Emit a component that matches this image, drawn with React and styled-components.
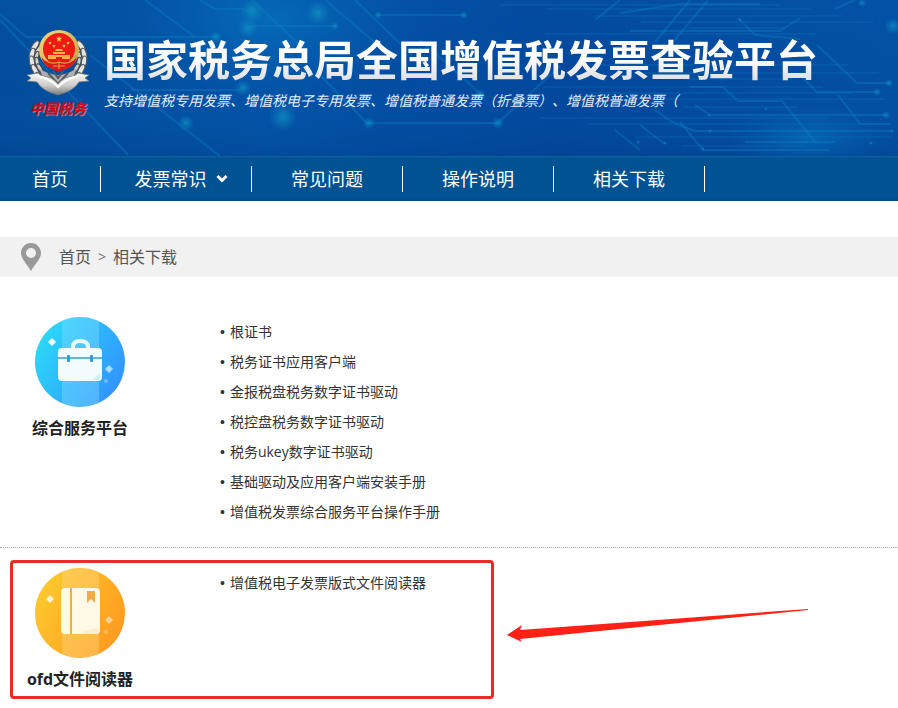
import React from "react";
import styled, { createGlobalStyle } from "styled-components";

const GlobalStyle = createGlobalStyle`
  * { box-sizing: border-box; }
  body {
    margin: 0;
    background: #fff;
    color: #333;
    font-family: "Open Sans", "Noto Sans CJK SC", sans-serif;
    text-spacing-trim: space-all;
    overflow-x: hidden;
  }
  a { color: inherit; text-decoration: none; }
`;

const Banner = styled.header`
  position: relative;
  overflow: hidden;
  display: flex;
  align-items: flex-start;
  gap: 12px;
  padding: 28px 24px 36px;
  min-height: 156px;
  background: linear-gradient(90deg, #034d9c 0%, #0352a6 30%, #03479c 62%, #034fa2 100%);
`;

const Circuit = styled.svg`
  position: absolute;
  inset: 0;
  width: 100%;
  height: 100%;
`;

const Brand = styled.div`
  position: relative;
  flex: none;
  width: 68px;
  display: flex;
  flex-direction: column;
  align-items: center;
`;

const BrandName = styled.span`
  font: italic 900 14px/20px "Noto Sans CJK SC", sans-serif;
  color: #c80d18;
  text-shadow: 1px 1px 0 #7088b4;
  white-space: nowrap;
`;

const Titles = styled.div`
  position: relative;
  white-space: nowrap;
`;

const Title = styled.h1`
  margin: 0;
  font-size: 42px;
  line-height: 64px;
  font-weight: 700;
  background: linear-gradient(180deg, #fff 45%, #dcdde2 85%);
  background-clip: text;
  -webkit-background-clip: text;
  color: transparent;
`;

const Subtitle = styled.p`
  margin: 0;
  font-size: 14px;
  line-height: 18px;
  font-style: italic;
  color: #e3ecf8;
`;

const Nav = styled.nav`
  display: flex;
  align-items: center;
  height: 45px;
  background: linear-gradient(180deg, #09609f 1px, #005293 2px, #005293 41px, #004b8d 43px);
`;

const NavLink = styled.a`
  display: flex;
  align-items: center;
  justify-content: center;
  gap: 9px;
  flex: none;
  width: ${(p) => (p.$first ? 101 : 151)}px;
  height: 26px;
  padding-left: ${(p) => (p.$menu ? 10 : 0)}px;
  border-right: 1px solid #fff;
  color: #fff;
  font-size: 18px;
  line-height: 26px;
`;

const Crumbs = styled.nav`
  display: flex;
  align-items: center;
  gap: 7px;
  height: 40px;
  margin-top: 36px;
  padding-left: 20px;
  background: #f1f1f1;
  color: #555;
  font-size: 16px;
  line-height: 24px;
`;

const Pin = styled.svg`
  width: 22px;
  height: 28px;
  margin-right: 10px;
`;

const Separator = styled.span`
  font-size: 14px;
  color: #777;
`;

const Content = styled.main`
  padding-top: 24px;
`;

const Section = styled.section`
  position: relative;
  display: flex;
  align-items: flex-start;
  padding: ${(p) => (p.$divided ? "16px 0 20px" : "20px 0 16px")};
  border-bottom: ${(p) => (p.$divided ? "1px dotted #aaa" : "none")};
`;

const Category = styled.div`
  flex: none;
  width: 160px;
  display: flex;
  flex-direction: column;
  align-items: center;
`;

const CategoryTitle = styled.h2`
  margin: 9px 0 0;
  font-size: 16px;
  line-height: 24px;
  font-weight: 700;
  color: #222;
`;

const Links = styled.ul`
  list-style: none;
  margin: 0;
  padding: 0 0 0 60px;
  font-size: 14px;
  line-height: 30px;
`;

const LinkRow = styled.li`
  display: flex;
  gap: 5px;
  &::before {
    content: "•";
    font-family: "Liberation Sans", sans-serif;
  }
`;

const Highlight = styled.div`
  position: absolute;
  left: 10px;
  top: 12px;
  width: 484px;
  height: 139px;
  border: 3px solid #ec2a22;
  border-radius: 4px;
  pointer-events: none;
`;

const Arrow = styled.svg`
  position: absolute;
  left: 506px;
  top: 60px;
  width: 304px;
  height: 36px;
  pointer-events: none;
`;

const strands = [
  "M0 14L26 37H215", "M0 20L128 155", "M145 0L195 37", "M90 55L220 156",
  "M200 0L215 9H245L252 15", "M252 26H335", "M130 90H240", "M252 0L300 45",
  "M325 0L378 45", "M355 0L412 55", "M376 15H464", "M320 75L367 123H498L560 66",
  "M420 40L482 95", "M595 20L620 0", "M655 42L690 0", "M668 48L708 0",
  "M738 18L755 35L800 39", "M817 45L857 83H890", "M800 75L817 92H875",
  "M838 95L860 124H890", "M690 87H723L738 101H782L816 143", "M710 115H885",
  "M695 105L710 115", "M640 125L665 144", "M680 122L703 150H830",
  "M655 110L672 122L695 131H892", "M745 142H835", "M615 130L640 150",
  "M620 13L680 4H760", "M630 31H780L800 18", "M835 9L855 0",
];

const nodes = [
  [252, 11, 6], [248, 28, 5], [318, 13, 6], [216, 37, 3], [243, 88, 4],
  [283, 117, 7], [186, 123, 4], [335, 26, 2], [378, 15, 2], [464, 15, 2],
  [369, 123, 3], [498, 123, 3], [480, 95, 3], [893, 26, 4], [862, 3, 2],
  [877, 92, 2], [889, 83, 2], [886, 115, 2], [710, 131, 1], [709, 115, 1],
  [665, 143, 1], [703, 149, 1], [740, 20, 1], [638, 142, 1], [871, 143, 1],
  [766, 109, 1], [892, 131, 1],
];

const traces = [5, 9, 16, 22, 28, 34, 65, 73, 79, 87, 93, 99, 107, 118, 124, 137, 146];

function CircuitArt() {
  return (
    <Circuit viewBox="0 0 898 156" preserveAspectRatio="xMinYMin slice" aria-hidden="true">
      <defs>
        <radialGradient id="node">
          <stop offset="0" stopColor="#1396c6" stopOpacity=".75" />
          <stop offset=".5" stopColor="#0c86be" stopOpacity=".45" />
          <stop offset="1" stopColor="#0c86be" stopOpacity="0" />
        </radialGradient>
        <radialGradient id="glow">
          <stop offset="0" stopColor="#078bd0" stopOpacity=".4" />
          <stop offset="1" stopColor="#0770c0" stopOpacity="0" />
        </radialGradient>
        <linearGradient id="shade" x2="0" y2="1">
          <stop offset="0" stopColor="#0866b8" stopOpacity=".15" />
          <stop offset=".6" stopColor="#0866b8" stopOpacity="0" />
          <stop offset="1" stopColor="#003a7c" stopOpacity=".25" />
        </linearGradient>
      </defs>
      <rect width="898" height="156" fill="url(#shade)" />
      <ellipse cx="270" cy="20" rx="150" ry="80" fill="url(#glow)" />
      <ellipse cx="808" cy="138" rx="80" ry="32" fill="url(#glow)" />
      <g stroke="#0b79bd" strokeOpacity=".24" strokeWidth="2">
        {traces.map((y, i) => (
          <path key={y} d={`M${500 + ((i * 47) % 190)} ${y}H${780 + ((i * 31) % 118)}`} />
        ))}
      </g>
      <g fill="none" stroke="#0b80c4" strokeOpacity=".4" strokeWidth="2">
        {strands.map((d) => <path key={d} d={d} />)}
      </g>
      {nodes.map(([x, y, r]) => (
        <circle key={`${x}-${y}`} cx={x} cy={y} r={r * 2} fill="url(#node)" />
      ))}
    </Circuit>
  );
}

function Emblem() {
  const leaves = [[-23, -8, -35], [-26, 0, -15], [-26, 8, 10], [-23, 16, 30], [-18, 23, 45]];
  const star = "M0-5L1-2H5L2 1L3 5L0 2L-3 5L-2 1L-5-2H-1Z";
  return (
    <svg width="68" height="70" viewBox="0 0 68 70" aria-hidden="true">
      <defs>
        <linearGradient id="silver" x2="0" y2="1">
          <stop offset="0" stopColor="#f7f7f5" />
          <stop offset=".55" stopColor="#cfcfcb" />
          <stop offset="1" stopColor="#787b80" />
        </linearGradient>
        <linearGradient id="gold" x2="1" y2="1">
          <stop offset="0" stopColor="#f0dc83" />
          <stop offset="1" stopColor="#c79b3b" />
        </linearGradient>
      </defs>
      {[1, -1].map((side) => (
        <g key={side} transform={`translate(34 26) scale(${side} 1)`}>
          <path d="M-21-12C-31 5-27 20-7 33L-4 26C-18 19-22 6-17-7Z" fill="#555b64" />
          {leaves.map(([x, y, turn]) => (
            <g key={y} transform={`translate(${x} ${y}) rotate(${-turn})`}>
              <ellipse rx="2.5" ry="6" fill="#e4e4e1" stroke="#54585d" strokeWidth="1" />
              <ellipse cx="5" cy="1" rx="2" ry="5" fill="#d0d0cc" stroke="#3f444b" strokeWidth="1" />
            </g>
          ))}
        </g>
      ))}
      <path d="M15 40Q34 54 53 40L48 52L35 58L20 52Z" fill="#aeb0b2" />
      <path d="M24 45L34 56L44 45M29 43L34 50L39 43" fill="none" stroke="#555960" strokeWidth="2" />
      <path d="M3 47L14 45L17 48Q28 48 34 56Q40 48 51 48L54 45L65 47L61 50L65 53L55 54Q50 63 34 67Q18 63 13 54L3 53L7 50Z" fill="url(#silver)" stroke="#74787c" strokeWidth=".8" />
      <path d="M14 48Q27 51 34 59Q41 51 54 48" fill="none" stroke="#fff" strokeWidth="2" />
      <ellipse cx="35" cy="22" rx="20" ry="20" fill="url(#gold)" />
      <circle cx="35" cy="21" r="16" fill="#ee1a14" />
      <path d="M17 29Q20 39 29 41L35 44L41 41Q50 39 53 29L49 33H21Z" fill="#d91816" />
      <path d={star} transform="translate(35 11) scale(.6)" fill="#ffdf4f" />
      {[[26, 15], [30, 18], [40, 18], [44, 15]].map(([x, y]) => (
        <path key={x} d={star} transform={`translate(${x} ${y}) scale(.36)`} fill="#ffdf4f" />
      ))}
      <path d="M31 23L32 21H38L39 23ZM29 24H41V26H29ZM24 27H46V31H38V29H32V31H24Z" fill="#ffb243" />
      <path d="M21 32Q27 37 35 34Q43 37 49 32M29 38H41M35 34V41" fill="none" stroke="#e49b3d" strokeWidth="1.2" />
    </svg>
  );
}

function Chevron() {
  return (
    <svg width="12" height="9" viewBox="0 0 12 9" aria-hidden="true">
      <path d="M1.5 2L6 6.5L10.5 2" fill="none" stroke="#fff" strokeWidth="3" />
    </svg>
  );
}

function Sparkles({ color, left }) {
  return (
    <g fill={color}>
      <path d="M0-4L4 0L0 4L-4 0Z" transform={`translate(${left} ${left === 17 ? 25 : 31})`} opacity=".95" />
      <path d="M74 48L78 52L74 56L70 52Z" opacity=".6" />
      <circle cx="71" cy="64" r="2" opacity=".3" />
    </g>
  );
}

function BriefcaseBadge() {
  return (
    <svg width="90" height="90" viewBox="0 0 90 90" aria-hidden="true">
      <defs>
        <linearGradient id="aqua" x1="0" y1=".2" x2="1" y2=".8">
          <stop offset="0" stopColor="#2bdcf7" />
          <stop offset="1" stopColor="#328fff" />
        </linearGradient>
        <clipPath id="aquaDisc"><circle cx="45" cy="45" r="45" /></clipPath>
      </defs>
      <g clipPath="url(#aquaDisc)">
        <rect width="90" height="90" fill="url(#aqua)" />
        <rect x="27" width="37" height="90" fill="#8de1ff" opacity=".35" />
      </g>
      <path d="M38 33V30Q38 24 45 24Q53 24 53 30V33" fill="none" stroke="#e3fbff" strokeWidth="4" />
      <rect x="23" y="31" width="44" height="33" rx="4" fill="#f2fcff" />
      <path d="M23 41H67" stroke="#329ed5" strokeWidth="1.3" />
      <rect x="32" y="38" width="3" height="7" rx="1" fill="#329ed5" />
      <rect x="55" y="38" width="3" height="7" rx="1" fill="#329ed5" />
      <path d="M57 63L65 56V60Q65 63 61 63Z" fill="#cceffd" />
      <Sparkles color="#fff" left={17} />
    </svg>
  );
}

function BookBadge() {
  return (
    <svg width="90" height="90" viewBox="0 0 90 90" aria-hidden="true">
      <defs>
        <linearGradient id="amber" x1="0" y1=".2" x2="1" y2=".8">
          <stop offset="0" stopColor="#fccb2d" />
          <stop offset="1" stopColor="#ff981f" />
        </linearGradient>
        <clipPath id="amberDisc"><circle cx="45" cy="45" r="45" /></clipPath>
      </defs>
      <g clipPath="url(#amberDisc)">
        <rect width="90" height="90" fill="url(#amber)" />
        <rect x="27" width="37" height="90" fill="#ffd886" opacity=".4" />
      </g>
      <rect x="26" y="20" width="39" height="46" rx="4" fill="#fff9e7" />
      <path d="M36 20V66" stroke="#f3ad45" strokeWidth="2" />
      <path d="M52 23H60V35L56 31L52 35Z" fill="#f3aa43" />
      <path d="M46 65Q58 59 64 61Q64 65 60 65Z" fill="#ffedc9" />
      <Sparkles color="#fff6dc" left={15} />
    </svg>
  );
}

const navItems = ["首页", "发票常识", "常见问题", "操作说明", "相关下载"];

const platformLinks = [
  "根证书", "税务证书应用客户端", "金报税盘税务数字证书驱动", "税控盘税务数字证书驱动",
  "税务ukey数字证书驱动", "基础驱动及应用客户端安装手册", "增值税发票综合服务平台操作手册",
];

function DownloadSection({ icon, title, links, divided, children }) {
  return (
    <Section $divided={divided}>
      <Category>
        {icon}
        <CategoryTitle>{title}</CategoryTitle>
      </Category>
      <Links>
        {links.map((text) => (
          <LinkRow key={text}><a href="#download">{text}</a></LinkRow>
        ))}
      </Links>
      {children}
    </Section>
  );
}

export default function App() {
  return (
    <>
      <GlobalStyle />
      <Banner>
        <CircuitArt />
        <Brand>
          <Emblem />
          <BrandName>中国税务</BrandName>
        </Brand>
        <Titles>
          <Title>国家税务总局全国增值税发票查验平台</Title>
          <Subtitle>支持增值税专用发票、增值税电子专用发票、增值税普通发票（折叠票）、增值税普通发票（</Subtitle>
        </Titles>
      </Banner>
      <Nav>
        {navItems.map((label, i) => (
          <NavLink key={label} href="#nav" $first={i === 0} $menu={i === 1}>
            {label}
            {i === 1 && <Chevron />}
          </NavLink>
        ))}
      </Nav>
      <Crumbs>
        <Pin viewBox="0 0 22 28" aria-hidden="true">
          <path fillRule="evenodd" fill="#999" d="M11 0C5 0 1 5 1 10C1 16 7 21 11 28C15 21 21 16 21 10C21 5 17 0 11 0ZM11 5A5 5 0 1 1 11 15A5 5 0 1 1 11 5Z" />
        </Pin>
        <a href="#home">首页</a>
        <Separator>&gt;</Separator>
        <a href="#downloads">相关下载</a>
      </Crumbs>
      <Content>
        <DownloadSection divided icon={<BriefcaseBadge />} title="综合服务平台" links={platformLinks} />
        <DownloadSection icon={<BookBadge />} title="ofd文件阅读器" links={["增值税电子发票版式文件阅读器"]}>
          <Highlight />
          <Arrow viewBox="0 0 304 36" aria-hidden="true">
            <path d="M1 27L16 17L14 22L302 1V2L14 31L16 34Z" fill="#ff2116" />
          </Arrow>
        </DownloadSection>
      </Content>
    </>
  );
}
